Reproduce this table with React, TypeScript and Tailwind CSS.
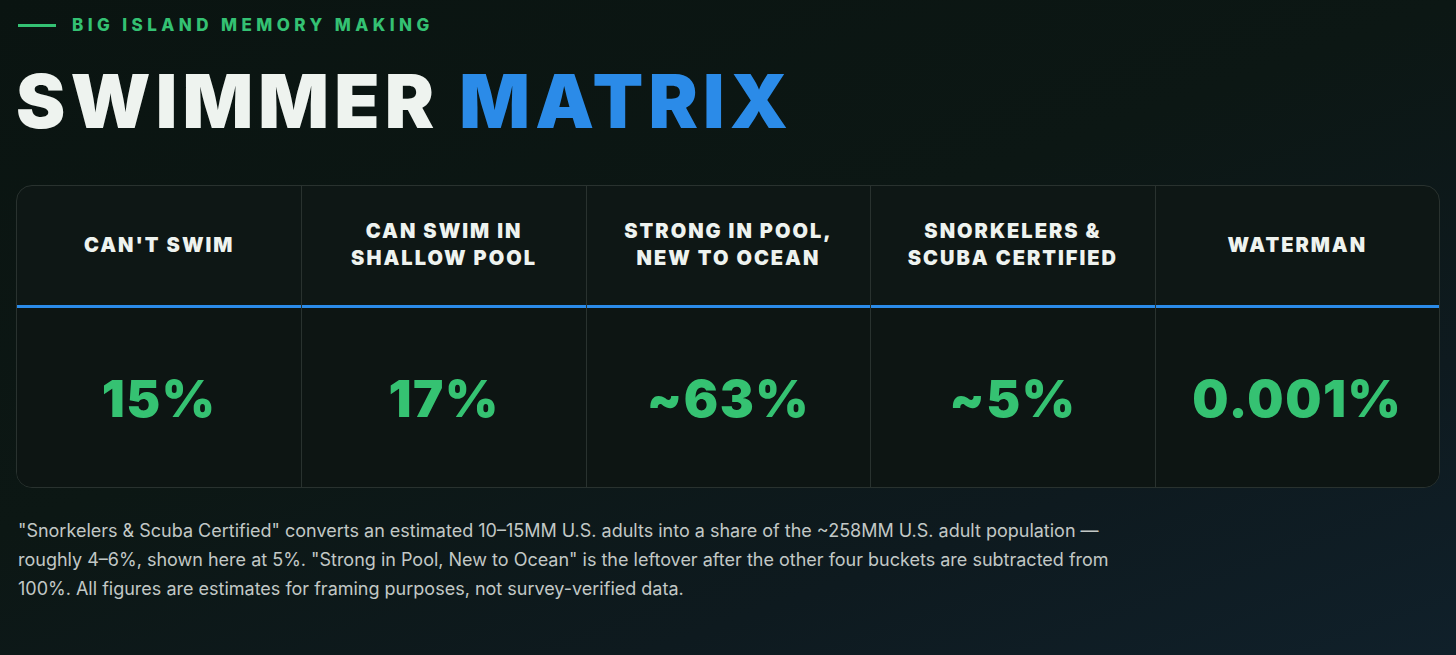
const columns = [
  { label: ["CAN'T SWIM"], value: "15%" },
  { label: ["CAN SWIM IN", "SHALLOW POOL"], value: "17%" },
  { label: ["STRONG IN POOL,", "NEW TO OCEAN"], value: "~63%" },
  { label: ["SNORKELERS &", "SCUBA CERTIFIED"], value: "~5%" },
  { label: ["WATERMAN"], value: "0.001%" },
]

export default function App() {
  return (
    <div className="min-h-[655px] w-full bg-[#0b1512] bg-[linear-gradient(160deg,#0a1411_0%,#0c1714_45%,#0e1a1f_75%,#10202a_100%)] px-4 pt-[13px] pb-10 font-['Inter',sans-serif]">
      {/* Eyebrow */}
      <div className="flex items-center gap-4 pl-[2px]">
        <div className="h-[3px] w-[38px] bg-[#34c173]" />
        <span className="text-[17px] font-extrabold tracking-[0.26em] text-[#34c173]">
          BIG ISLAND MEMORY MAKING
        </span>
      </div>

      {/* Title */}
      <h1 className="mt-[20px] text-[74px] font-black leading-[84px] tracking-[0.07em]">
        <span className="text-[#eef3ef]">SWIMMER </span>
        <span className="text-[#2b8be8]">MATRIX</span>
      </h1>

      {/* Matrix */}
      <div className="mt-[42px] grid grid-cols-5 overflow-hidden rounded-2xl border border-[#29322f] bg-[#0e1715]">
        {columns.map((c, i) => (
          <div key={i} className={i > 0 ? "border-l border-[#29322f]" : ""}>
            <div className="flex h-[122px] flex-col items-center justify-center border-b-[3px] border-[#2b8be8] text-center text-[20px] font-black leading-[27px] tracking-[0.1em] text-[#eef3ef]">
              {c.label.map((l) => (
                <span key={l}>{l}</span>
              ))}
            </div>
            <div className="flex h-[179px] items-center justify-center bg-[#0d1513] pt-[4px] text-[51px] font-black tracking-[0.03em] text-[#35c272]">
              {c.value}
            </div>
          </div>
        ))}
      </div>

      {/* Footnote */}
      <p className="mt-[28px] max-w-[1110px] pl-[2px] text-[18px] leading-[29px] text-[#c2c8c6]">
        "Snorkelers &amp; Scuba Certified" converts an estimated 10–15MM U.S. adults into a share of the ~258MM U.S. adult population — roughly 4–6%, shown here at 5%. "Strong in Pool, New to Ocean" is the leftover after the other four buckets are subtracted from 100%. All figures are estimates for framing purposes, not survey-verified data.
      </p>
    </div>
  )
}
